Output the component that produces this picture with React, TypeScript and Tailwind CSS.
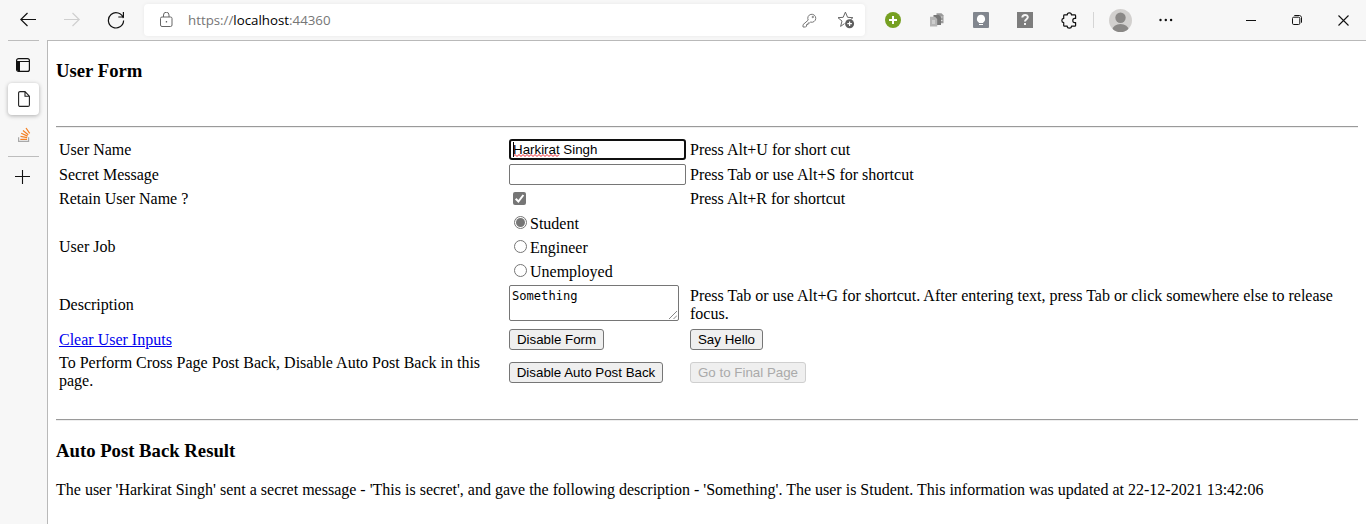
import type { ReactNode } from "react";

const serif = "font-['Liberation_Serif',serif]";
const sans = "font-['Liberation_Sans',sans-serif]";

function Toolbar() {
  return (
    <header className="flex h-10 shrink-0 items-center bg-[#f7f7f7]">
      <svg className="ml-5 shrink-0" width="17" height="16" viewBox="0 0 17 16" fill="none" stroke="#111" strokeWidth="1.2">
        <path d="M16 7.5H.8M7.5 1L.8 7.5l6.7 6.5" />
      </svg>
      <svg className="ml-[27px] shrink-0" width="17" height="16" viewBox="0 0 17 16" fill="none" stroke="#cfcfcf" strokeWidth="1.2">
        <path d="M0 7.5h15.2M8.5 1l6.7 6.5-6.7 6.5" />
      </svg>
      <svg className="ml-[26px] shrink-0" width="18" height="18" viewBox="0 0 18 18" fill="none" stroke="#111" strokeWidth="1.2">
        <path d="M16.3 7.2A7.6 7.6 0 1 0 16.6 9.5M16.4 1v5H11.3" />
      </svg>
      <div className="ml-[19px] flex h-8 w-[721px] shrink-0 items-center rounded bg-white shadow-[0_0_4px_rgba(0,0,0,0.06)]">
        <svg className="ml-4 shrink-0" width="13" height="16" viewBox="0 0 13 16" fill="none" stroke="#666">
          <rect x=".5" y="5" width="11.5" height="9.5" rx="1.5" />
          <path d="M3.5 5V3a2.7 2.7 0 0 1 5.5 0v2" />
          <rect x="5.8" y="9" width="1.3" height="1.5" fill="#666" stroke="none" />
        </svg>
        <div className="ml-[15px] grow font-['Open_Sans',sans-serif] text-[13.3px] leading-4 text-[#767676]">
          https://<span className="text-black">localhost</span>:44360
        </div>
        <svg className="mr-[20px] shrink-0" width="15" height="15" viewBox="0 0 15 15" fill="none" stroke="#777" strokeLinejoin="round">
          <path d="M6.2 7.1A4 4 0 1 1 8.6 9.1L7.4 10H6v1.6H4.5v1.6L3.7 14H1v-2.3z" />
          <circle cx="10.8" cy="4" r=".7" />
        </svg>
        <svg className="mr-[10px] shrink-0" width="18" height="18" viewBox="0 0 18 18" fill="none">
          <path d="M7.5 12.6L3.6 15.4 5 10.1 1 6.7l5.2-.4L8.4 1.1l2.2 5.2 5.3.4-2.5 2.2" stroke="#666" strokeLinejoin="round" />
          <circle cx="12.6" cy="12.7" r="4.5" fill="#5d5d5d" />
          <path d="M10.3 12.7h4.6M12.6 10.4V15" stroke="#fff" strokeWidth="1.2" />
        </svg>
      </div>
      <svg className="ml-5 shrink-0" width="16" height="16" viewBox="0 0 16 16">
        <circle cx="8" cy="8" r="8" fill="#76a022" />
        <path d="M8 4v8M4 8h8" stroke="#fff" strokeWidth="2" />
      </svg>
      <svg className="ml-7 shrink-0" width="16" height="16" viewBox="0 0 16 16">
        <path d="M7.5 1.3h5l2 2v8h-7z" fill="#9a9a9a" />
        <path d="M4.5 3H10l2 2.2V13H4.5z" fill="#777" />
        <path d="M1 4.7h5l2.2 2.2v7.6H1z" fill="#b5b5b5" />
        <path d="M3 8h3v4H3z" fill="#cdcdcd" />
        <path d="M12 5h1.5M12 8.5h1.5" stroke="#ddd" fill="none" />
      </svg>
      <svg className="ml-7 shrink-0" width="16" height="16" viewBox="0 0 16 16">
        <rect width="16" height="16" rx="1" fill="#81868e" />
        <path d="M8 2.7a4.2 4.2 0 0 0-2.2 7.7V11h4.4v-.6A4.2 4.2 0 0 0 8 2.7zM6 12h4v1H6z" fill="#fff" />
      </svg>
      <svg className="ml-7 shrink-0" width="16" height="16" viewBox="0 0 16 16">
        <rect width="16" height="16" fill="#7d7d7d" />
        <path d="M5.3 5.5C5.5 2 11 2.2 10.8 5.3 10.7 7.2 8 7.3 8 9.6" fill="none" stroke="#f4f4f4" strokeWidth="2" />
        <rect x="7" y="11" width="2" height="2" fill="#f4f4f4" />
      </svg>
      <svg className="ml-7 shrink-0" width="17" height="17" viewBox="0 0 17 17" fill="none" stroke="#111" strokeWidth="1.2" strokeLinejoin="round">
        <path d="M3.5 2.9H6.2C6.3.2 10.4.2 10.5 2.9h3.3c.5 0 .8.3.8.8v2.7h-1c-2.4 0-2.4 4.2 0 4.2h1v2.8c0 .5-.3.8-.8.8h-3.3c-.1 2.6-4.2 2.6-4.3 0H3.5c-.5 0-.8-.3-.8-.8v-2.8C.2 10.4.2 6.5 2.7 6.4V3.7c0-.5.3-.8.8-.8z" />
      </svg>
      <div className="ml-[15px] h-4 w-px shrink-0 bg-[#d5d5d5]" />
      <svg className="ml-[15px] shrink-0" width="23" height="23" viewBox="0 0 23 23">
        <defs>
          <clipPath id="avatar"><circle cx="11.5" cy="11.5" r="11.5" /></clipPath>
        </defs>
        <g clipPath="url(#avatar)">
          <rect width="23" height="23" fill="#d2d0ce" />
          <circle cx="11.5" cy="8.7" r="5.2" fill="#8a8886" />
          <ellipse cx="11.5" cy="21" rx="8.2" ry="6" fill="#8a8886" />
        </g>
      </svg>
      <svg className="ml-[27px] shrink-0" width="14" height="4" viewBox="0 0 14 4" fill="#111">
        <circle cx="1.5" cy="2" r="1.2" />
        <circle cx="6.8" cy="2" r="1.2" />
        <circle cx="12.1" cy="2" r="1.2" />
      </svg>
      <svg className="ml-[73px] shrink-0" width="10" height="10" viewBox="0 0 10 10" stroke="#111">
        <path d="M0 5.5h10" />
      </svg>
      <svg className="ml-9 shrink-0" width="10" height="10" viewBox="0 0 10 10" fill="none" stroke="#111">
        <rect x=".5" y="2.2" width="7.3" height="7.3" rx="1.2" />
        <path d="M2.3.5h5c1.2 0 2.2 1 2.2 2.2v5" />
      </svg>
      <svg className="ml-9 shrink-0" width="11" height="11" viewBox="0 0 11 11" stroke="#111" strokeWidth="1.1">
        <path d="M.5.5l10 10M10.5.5l-10 10" />
      </svg>
    </header>
  );
}

function TabRail() {
  return (
    <nav className="flex w-[47px] shrink-0 flex-col items-start bg-[#f7f7f7] pl-2">
      <div className="h-px w-[31px] bg-[#bdbdbd]" />
      <svg className="mt-[17px] ml-2" width="14" height="14" viewBox="0 0 14 14">
        <rect x=".6" y=".6" width="12.8" height="12.8" rx="2" fill="none" stroke="#111" strokeWidth="1.2" />
        <path d="M1 3h3v10H2l-1-1z" fill="#111" />
        <path d="M1 3.5h12" stroke="#111" />
      </svg>
      <div className="mt-[11px] flex h-8 w-[31px] items-center justify-center rounded bg-white shadow-[0_1px_4px_rgba(0,0,0,0.3)]">
        <svg width="12" height="16" viewBox="0 0 12 16" fill="none" stroke="#222" strokeWidth="1.1">
          <path d="M2 .6h5l4.4 4.6V14c0 .8-.6 1.4-1.4 1.4H2c-.8 0-1.4-.6-1.4-1.4V2C.6 1.2 1.2.6 2 .6zM7 .6v4.6h4.4" />
        </svg>
      </div>
      <svg className="mt-3 ml-[10px]" width="13" height="16" viewBox="0 0 13 16" fill="none" stroke="#f48024" strokeWidth="1.25">
        <path d="M.6 10.2v4.2h10v-4.2" stroke="#a9a9a9" strokeWidth="1.2" />
        <path d="M2.3 12.4h6.8M2.5 9.4l6.7 1.3M3.2 6.3l6.4 2.8M5 3.4l5.2 4.4M8 1l3.7 5.3" />
      </svg>
      <div className="mt-[13px] h-px w-[31px] bg-[#bdbdbd]" />
      <svg className="mt-[13px] ml-[7px]" width="15" height="14" viewBox="0 0 15 14" stroke="#111" strokeWidth="1.1">
        <path d="M0 6.5h15M7.5 0v14" />
      </svg>
    </nav>
  );
}

function FormRow({ label, control, hint, size }: { label: ReactNode; control: ReactNode; hint?: ReactNode; size: string }) {
  return (
    <div className={`grid grid-cols-[450px_181px_1fr] items-center pl-[3px] ${size}`}>
      <div className="pr-6">{label}</div>
      <div className="flex flex-col items-start">{control}</div>
      <div className="pr-5">{hint}</div>
    </div>
  );
}

function FormButton({ children, width, disabled = false }: { children: ReactNode; width: string; disabled?: boolean }) {
  return (
    <button
      disabled={disabled}
      className={`block h-[21px] rounded-[3px] border border-[#767676] bg-[#efefef] text-center text-[13.333px] leading-[19px] whitespace-nowrap text-black disabled:border-[#cfcfcf] disabled:text-[#aaaaaa] ${sans} ${width}`}
    >
      {children}
    </button>
  );
}

function Radio({ label, checked = false }: { label: string; checked?: boolean }) {
  return (
    <label className="flex h-6 items-center pl-[5px]">
      <span className="mb-[2px] flex size-[13px] items-center justify-center rounded-full border border-[#767676] bg-white">
        {checked && <span className="size-[9px] rounded-full bg-[#767676]" />}
      </span>
      <span className="ml-[3px] pt-[2px]">{label}</span>
    </label>
  );
}

export default function App() {
  return (
    <div className="flex h-[524px] w-[1366px] flex-col overflow-hidden bg-[#f7f7f7]">
      <Toolbar />
      <div className="flex min-h-0 grow">
        <TabRail />
        <main className={`min-w-0 grow border-t border-l border-[#b9b9b9] bg-white pr-2 pl-2 text-[16px] leading-[18px] text-black ${serif}`}>
          <h3 className="pt-[19px] text-[18.72px] leading-[21px] font-bold">User Form</h3>
          <div className="mt-[45px] h-[2px] border-t border-b border-t-[#9a9a9a] border-b-[#eeeeee]" />
          <form className="pt-[10px]">
            <FormRow
              size="h-6"
              label="User Name"
              control={
                <div className="relative mb-[2px]">
                  <input
                    defaultValue="Harkirat Singh"
                    spellCheck={false}
                    className={`block h-[21px] w-[177px] rounded-[3px] border-2 border-[#101010] bg-white px-[2px] text-[13.333px] leading-4 outline-none ${sans}`}
                  />
                  <svg className="absolute top-[15px] left-[4px]" width="47" height="3" viewBox="0 0 47 3" fill="none" stroke="#e8202a">
                    <path d="M0 2.5l2-2 2 2 2-2 2 2 2-2 2 2 2-2 2 2 2-2 2 2 2-2 2 2 2-2 2 2 2-2 2 2 2-2 2 2 2-2 2 2 2-2 2 2 2-2" />
                  </svg>
                  <span className="absolute top-[3px] left-[4px] h-[15px] w-px bg-black" />
                </div>
              }
              hint="Press Alt+U for short cut"
            />
            <FormRow
              size="h-[25px]"
              label="Secret Message"
              control={<input className="block h-[21px] w-[177px] rounded-[2px] border border-[#767676] bg-white" />}
              hint="Press Tab or use Alt+S for shortcut"
            />
            <FormRow
              size="h-6"
              label="Retain User Name ?"
              control={
                <svg className="mb-[2px] ml-1" width="13" height="13" viewBox="0 0 13 13">
                  <rect width="13" height="13" rx="2" fill="#767676" />
                  <path d="M2.7 6.8l2.7 2.7 5-6.5" fill="none" stroke="#fff" strokeWidth="2" />
                </svg>
              }
              hint="Press Alt+R for shortcut"
            />
            <FormRow
              size="h-[72px]"
              label="User Job"
              control={
                <>
                  <Radio label="Student" checked />
                  <Radio label="Engineer" />
                  <Radio label="Unemployed" />
                </>
              }
            />
            <FormRow
              size="h-[44px]"
              label="Description"
              control={
                <div className="relative mb-[4px]">
                  <textarea
                    defaultValue="Something"
                    spellCheck={false}
                    className="block h-9 w-[170px] resize-none overflow-hidden rounded-[2px] border border-[#767676] bg-white px-[2px] py-[3px] font-['DejaVu_Sans_Mono',monospace] text-[12.1px] leading-[15px] outline-none"
                  />
                  <svg className="absolute right-[2px] bottom-[2px]" width="8" height="8" viewBox="0 0 8 8" stroke="#666" strokeWidth=".8">
                    <path d="M0 8l8-8M4.5 8L8 4.5" />
                  </svg>
                </div>
              }
              hint="Press Tab or use Alt+G for shortcut. After entering text, press Tab or click somewhere else to release focus."
            />
            <FormRow
              size="h-[25px]"
              label={<a className="text-[#0000ee] underline">Clear User Inputs</a>}
              control={<FormButton width="w-[95px]">Disable Form</FormButton>}
              hint={<FormButton width="w-[73px]">Say Hello</FormButton>}
            />
            <FormRow
              size="h-[41px]"
              label={<p className="pb-[2px]">To Perform Cross Page Post Back, Disable Auto Post Back in this page.</p>}
              control={<FormButton width="w-[154px]">Disable Auto Post Back</FormButton>}
              hint={<FormButton width="w-[116px]" disabled>Go to Final Page</FormButton>}
            />
          </form>
          <div className="mt-[26px] h-[2px] border-t border-b border-t-[#9a9a9a] border-b-[#eeeeee]" />
          <h3 className="mt-[19px] text-[18.72px] leading-[21px] font-bold">Auto Post Back Result</h3>
          <p className="mt-5 whitespace-nowrap">
            The user 'Harkirat Singh' sent a secret message - 'This is secret', and gave the following description - 'Something'. The user is Student. This information was updated at 22-12-2021 13:42:06
          </p>
        </main>
      </div>
    </div>
  );
}
